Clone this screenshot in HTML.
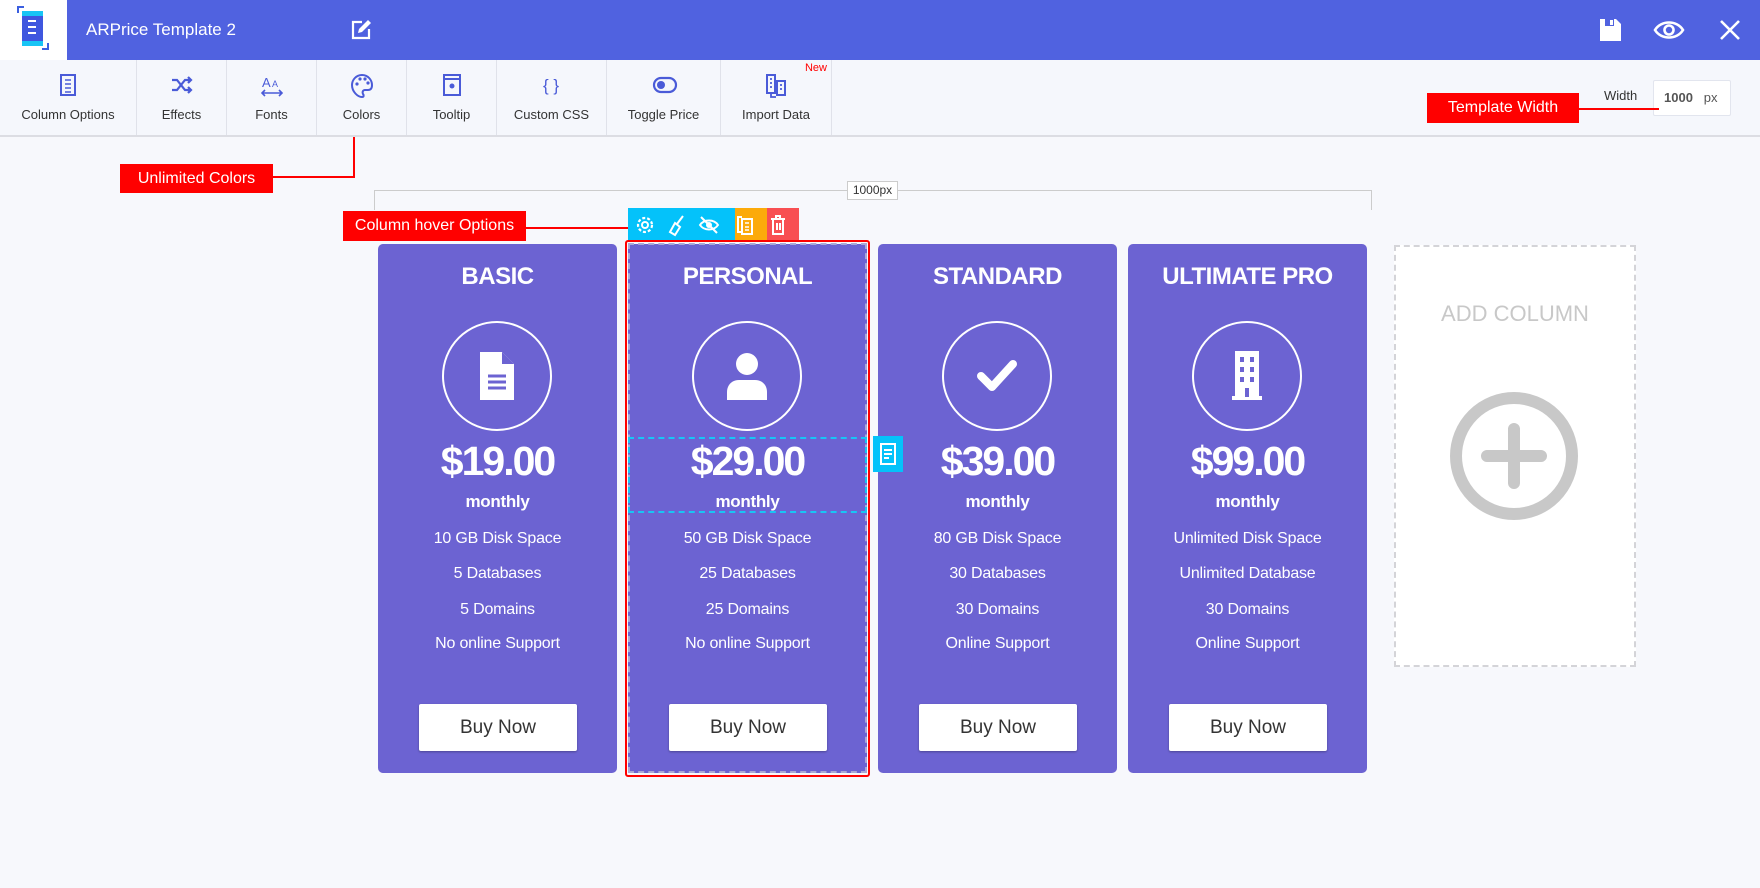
<!DOCTYPE html>
<html><head><meta charset="utf-8"><style>
*{box-sizing:border-box;margin:0;padding:0}
body{width:1760px;height:888px;background:#f7f8fc;font-family:"Liberation Sans",sans-serif;position:relative;overflow:hidden}
.a{position:absolute}
.hdr{left:0;top:0;width:1760px;height:60px;background:#5062e0}
.tb{left:0;top:60px;width:1760px;height:77px;background:#f5f7fc;border-bottom:2px solid #dcdde3}
.ti{position:absolute;top:0;height:75px;border-right:1px solid #e0e2ea;text-align:center;font-size:13px;color:#333}
.ti svg{position:absolute;left:50%;top:13px;margin-left:-12px}
.ti span{position:absolute;left:0;right:0;top:47px}
.red{background:#f00;color:#fff;font-size:15px;text-align:center}
.col{width:239px;height:529px;top:244px;background:#6c63d2;border-radius:5px;color:#fff;text-align:center}
.col h2{position:absolute;top:19px;left:0;right:0;font-size:24px;font-weight:bold;letter-spacing:-0.5px}
.circ{position:absolute;left:64px;top:77px;width:110px;height:110px;border:2px solid #fff;border-radius:50%}
.circ svg{position:absolute;left:50%;top:50%;transform:translate(-50%,-50%)}
.pr{position:absolute;top:194px;left:0;right:0;font-size:41px;font-weight:bold;letter-spacing:-2px}
.mo{position:absolute;top:248px;left:0;right:0;font-size:17px;font-weight:bold;letter-spacing:-0.3px}
.f{position:absolute;left:0;right:0;font-size:16px;letter-spacing:-0.2px}
.btn{position:absolute;left:41px;top:460px;width:158px;height:47px;background:#fff;border-radius:2px;color:#333;font-size:19px;line-height:47px;box-shadow:0 1px 2px rgba(0,0,0,.3)}
</style></head><body>
<div class="a hdr"></div>
<div class="a" style="left:0;top:0;width:67px;height:60px;background:#fff"></div>
<svg class="a" style="left:16px;top:5px" width="34" height="46" viewBox="0 0 34 46"><path d="M2 8V2h6M26 44h6v-6" stroke="#3b5fe0" stroke-width="2" fill="none"/><rect x="6" y="6" width="21" height="35" rx="4" fill="#3f57df"/><rect x="6" y="6" width="21" height="5" fill="#18c5f5"/><rect x="6" y="36" width="21" height="5" fill="#18c5f5"/><path d="M12 16h8M12 22h8M12 28h8" stroke="#fff" stroke-width="2"/></svg>
<div class="a" style="left:86px;top:20px;color:#fff;font-size:17px">ARPrice Template 2</div>
<svg class="a" style="left:350px;top:19px" width="22" height="22" viewBox="0 0 22 22"><path d="M12 3H3v16h16v-9" stroke="#fff" stroke-width="2.2" fill="none"/><path d="M8 14l1-4 9-9 3 3-9 9z" fill="#fff"/></svg>
<svg class="a" style="left:1600px;top:19px" width="21" height="22" viewBox="0 0 21 22"><path d="M0 0h16l5 5v17H0z" fill="#fff"/><rect x="5" y="0" width="9" height="7" fill="#5062e0"/><rect x="10" y="1" width="3" height="5" fill="#fff"/></svg>
<svg class="a" style="left:1653px;top:19px" width="32" height="22" viewBox="0 0 32 22"><path d="M2 11C8 1 24 1 30 11 24 21 8 21 2 11z" stroke="#fff" stroke-width="2.6" fill="none"/><circle cx="16" cy="11" r="4.5" stroke="#fff" stroke-width="2.6" fill="none"/></svg>
<svg class="a" style="left:1719px;top:19px" width="22" height="22" viewBox="0 0 22 22"><path d="M2 2l18 18M20 2L2 20" stroke="#fff" stroke-width="2.6"/></svg>

<div class="a tb">
<div class="ti" style="left:0;width:137px"><svg width="24" height="24" viewBox="0 0 24 24"><rect x="5" y="2" width="14" height="20" stroke="#4a5bd8" stroke-width="2" fill="none"/><path d="M9 7h6M9 11h6M9 15h6M9 19h6" stroke="#4a5bd8" stroke-width="1.6"/></svg><span>Column Options</span></div>
<div class="ti" style="left:137px;width:90px"><svg width="24" height="24" viewBox="0 0 24 24"><path d="M2 7h5l8 10h6M2 17h5l8-10h6M18 4l3 3-3 3M18 14l3 3-3 3" stroke="#4a5bd8" stroke-width="2.2" fill="none"/></svg><span>Effects</span></div>
<div class="ti" style="left:227px;width:90px"><svg width="24" height="24" viewBox="0 0 24 24"><text x="2" y="14" font-size="13" fill="#4a5bd8" font-family="Liberation Sans">A</text><text x="12" y="14" font-size="9" fill="#4a5bd8" font-family="Liberation Sans">A</text><path d="M2 20h20M5 17l-3 3 3 3M19 17l3 3-3 3" stroke="#4a5bd8" stroke-width="1.6" fill="none"/></svg><span>Fonts</span></div>
<div class="ti" style="left:317px;width:90px"><svg width="24" height="26" viewBox="0 0 24 26"><path d="M12 2C6 2 2 7 2 12c0 7 6 12 10 12 2 0 2-2 1-3-1-2 0-4 2-4h3c3 0 4-2 4-5 0-5-4-10-10-10z" stroke="#4a5bd8" stroke-width="2" fill="none"/><circle cx="7" cy="11" r="1.6" fill="#4a5bd8"/><circle cx="10" cy="6" r="1.6" fill="#4a5bd8"/><circle cx="15" cy="6" r="1.6" fill="#4a5bd8"/><circle cx="18" cy="10" r="1.6" fill="#4a5bd8"/></svg><span>Colors</span></div>
<div class="ti" style="left:407px;width:90px"><svg width="24" height="24" viewBox="0 0 24 24"><rect x="4" y="2" width="16" height="20" stroke="#4a5bd8" stroke-width="2" fill="none"/><path d="M4 6h16" stroke="#4a5bd8" stroke-width="2"/><circle cx="12" cy="13" r="2.5" fill="#4a5bd8"/></svg><span>Tooltip</span></div>
<div class="ti" style="left:497px;width:110px"><svg width="24" height="24" viewBox="0 0 24 24"><text x="3" y="18" font-size="17" fill="#4a5bd8" font-family="Liberation Sans">{ }</text></svg><span>Custom CSS</span></div>
<div class="ti" style="left:607px;width:114px"><svg width="26" height="24" viewBox="0 0 26 24"><rect x="2" y="5" width="22" height="14" rx="7" stroke="#4a5bd8" stroke-width="2.2" fill="none"/><circle cx="9" cy="12" r="4" fill="#4a5bd8"/></svg><span>Toggle Price</span></div>
<div class="ti" style="left:721px;width:111px"><svg width="24" height="26" viewBox="0 0 24 26"><rect x="3" y="2" width="8" height="18" stroke="#4a5bd8" stroke-width="2" fill="none"/><rect x="13" y="8" width="8" height="14" stroke="#4a5bd8" stroke-width="2" fill="none"/><path d="M6 6h2M6 10h2M6 14h2M16 12h2M16 16h2M7 20v4h5" stroke="#4a5bd8" stroke-width="1.8" fill="none"/></svg><span>Import Data</span><div class="a" style="right:4px;top:2px;color:#f00;font-size:11px">New</div></div>
<div class="a" style="left:1604px;top:28px;font-size:13px;color:#333">Width</div>
<div class="a" style="left:1653px;top:20px;width:78px;height:36px;background:#fff;border:1px solid #e2e5ee;border-radius:2px;font-size:13px;line-height:34px;padding-left:10px;color:#555"><b>1000</b>&nbsp;&nbsp;&nbsp;px</div>
</div>

<div class="a red" style="left:1427px;top:93px;width:152px;height:30px;line-height:30px;font-size:16px">Template Width</div>
<div class="a" style="left:1579px;top:108px;width:80px;height:2px;background:#f00"></div>

<div class="a" style="left:353px;top:137px;width:2px;height:41px;background:#f00"></div>
<div class="a" style="left:273px;top:176px;width:82px;height:2px;background:#f00"></div>
<div class="a red" style="left:120px;top:164px;width:153px;height:29px;line-height:29px;font-size:16px">Unlimited Colors</div>

<div class="a" style="left:374px;top:190px;width:998px;height:20px;border:1px solid #ccc;border-bottom:none"></div>
<div class="a" style="left:847px;top:181px;width:51px;height:19px;background:#fff;border:1px solid #ccc;font-size:12px;line-height:17px;text-align:center;color:#333">1000px</div>

<div class="a red" style="left:343px;top:211px;width:183px;height:30px;line-height:30px;font-size:16px">Column hover Options</div>
<div class="a" style="left:526px;top:227px;width:102px;height:2px;background:#f00"></div>
<div class="a" style="left:628px;top:208px;width:107px;height:34px;background:#04c2fa"></div>
<div class="a" style="left:735px;top:208px;width:32px;height:34px;background:#fcaa0a"></div>
<div class="a" style="left:767px;top:208px;width:32px;height:34px;background:#f84f52"></div>
<svg class="a" style="left:628px;top:208px" width="171" height="34" viewBox="0 0 171 34">
<circle cx="17" cy="17" r="7" stroke="#fff" stroke-width="2.2" fill="none" stroke-dasharray="3 2"/><circle cx="17" cy="17" r="3" stroke="#fff" stroke-width="2" fill="none"/>
<path d="M55 8l-6 8M42 24l5-9 5 4-5 8z" stroke="#fff" stroke-width="2" fill="none"/>
<path d="M72 17c4-6 14-6 18 0-4 6-14 6-18 0z" stroke="#fff" stroke-width="2" fill="none"/><circle cx="81" cy="17" r="3" fill="#fff"/><path d="M73 9l16 16" stroke="#fff" stroke-width="2"/>
<path d="M114 9h-4v15h3" stroke="#fff" stroke-width="2" fill="none"/><rect x="114" y="11" width="10" height="15" stroke="#fff" stroke-width="2" fill="none"/><path d="M117 15h4M117 19h4M117 22h4" stroke="#fff" stroke-width="1.5"/>
<path d="M143 11h14M148 11V8h4v3M145 11v15h10V11M149 15v7M152 15v7" stroke="#fff" stroke-width="2" fill="none"/>
</svg>

<div class="a col" style="left:378px"><h2>BASIC</h2><div class="circ"><svg width="34" height="48" viewBox="0 0 34 48"><path d="M0 0h22l12 12v36H0z" fill="#fff"/><path d="M22 0v12h12" fill="#6c63d2"/><path d="M8 24h18M8 30h18M8 36h18" stroke="#6c63d2" stroke-width="3"/></svg></div><div class="pr">$19.00</div><div class="mo">monthly</div><div class="f" style="top:286px">10 GB Disk Space</div><div class="f" style="top:321px">5 Databases</div><div class="f" style="top:357px">5 Domains</div><div class="f" style="top:391px">No online Support</div><div class="btn">Buy Now</div></div>

<div class="a col" style="left:628px"><h2>PERSONAL</h2><div class="circ"><svg width="40" height="48" viewBox="0 0 40 48"><circle cx="20" cy="12" r="11" fill="#fff"/><path d="M0 48v-8c0-7 5-12 12-12h16c7 0 12 5 12 12v8z" fill="#fff"/></svg></div><div class="pr">$29.00</div><div class="mo">monthly</div><div class="f" style="top:286px">50 GB Disk Space</div><div class="f" style="top:321px">25 Databases</div><div class="f" style="top:357px">25 Domains</div><div class="f" style="top:391px">No online Support</div><div class="btn">Buy Now</div></div>

<div class="a col" style="left:878px"><h2>STANDARD</h2><div class="circ"><svg width="40" height="40" viewBox="0 0 40 40"><path d="M4 20l11 11L36 8" stroke="#fff" stroke-width="8" fill="none" stroke-linecap="round" stroke-linejoin="round"/></svg></div><div class="pr">$39.00</div><div class="mo">monthly</div><div class="f" style="top:286px">80 GB Disk Space</div><div class="f" style="top:321px">30 Databases</div><div class="f" style="top:357px">30 Domains</div><div class="f" style="top:391px">Online Support</div><div class="btn">Buy Now</div></div>

<div class="a col" style="left:1128px"><h2>ULTIMATE PRO</h2><div class="circ"><svg width="30" height="50" viewBox="0 0 30 50"><rect x="3" y="0" width="24" height="46" fill="#fff"/><rect x="0" y="45" width="30" height="4" fill="#fff"/><g fill="#6c63d2"><rect x="8" y="6" width="4" height="5"/><rect x="18" y="6" width="4" height="5"/><rect x="8" y="16" width="4" height="5"/><rect x="18" y="16" width="4" height="5"/><rect x="8" y="26" width="4" height="5"/><rect x="18" y="26" width="4" height="5"/><rect x="13" y="37" width="4" height="9"/></g></svg></div><div class="pr">$99.00</div><div class="mo">monthly</div><div class="f" style="top:286px">Unlimited Disk Space</div><div class="f" style="top:321px">Unlimited Database</div><div class="f" style="top:357px">30 Domains</div><div class="f" style="top:391px">Online Support</div><div class="btn">Buy Now</div></div>

<div class="a" style="left:625px;top:240px;width:245px;height:537px;border:2px solid #f00;border-radius:3px"></div>
<div class="a" style="left:628px;top:243px;width:239px;height:530px;border:2px dashed #aaa8d6"></div>
<div class="a" style="left:628px;top:437px;width:239px;height:76px;border:2px dashed #18c5f5"></div>
<div class="a" style="left:873px;top:436px;width:30px;height:36px;background:#04c2fa"></div>
<svg class="a" style="left:879px;top:442px" width="18" height="24" viewBox="0 0 18 24"><rect x="2" y="2" width="14" height="20" stroke="#fff" stroke-width="2" fill="none"/><path d="M5 8h8M5 12h8M5 16h5" stroke="#fff" stroke-width="2"/></svg>

<div class="a" style="left:1394px;top:245px;width:242px;height:422px;background:#fff;border:2px dashed #d4d4d8"></div>
<div class="a" style="left:1394px;top:301px;width:242px;text-align:center;font-size:22px;color:#c8c8c8">ADD COLUMN</div>
<svg class="a" style="left:1449px;top:391px" width="130" height="130" viewBox="0 0 130 130"><circle cx="65" cy="65" r="58" stroke="#c8c8c8" stroke-width="12" fill="none"/><path d="M65 38v54M38 65h54" stroke="#c8c8c8" stroke-width="12" stroke-linecap="round"/></svg>
</body></html>
